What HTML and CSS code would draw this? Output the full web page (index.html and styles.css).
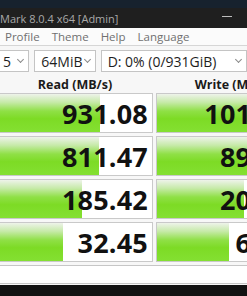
FILE: index.html
```html
<!DOCTYPE html>
<html lang="en">
<head>
    <meta charset="UTF-8">
    <meta name="viewport" content="width=device-width, initial-scale=1.0">
    <link rel="stylesheet" href="styles.css">
    <title>CrystalDiskMark 8.0.4 x64 [Admin]</title>
</head>
<body>
    <div class="window">
        <div class="desk"></div>
        <div class="titlebar">
            <span class="title">Mark 8.0.4 x64 [Admin]</span>
            <span class="min-btn"></span>
        </div>
        <div class="menubar">
            <span>Profile</span>
            <span>Theme</span>
            <span>Help</span>
            <span>Language</span>
        </div>
        <div class="controls">
            <div class="combo combo-count">5 <span class="chev"></span></div>
            <div class="combo combo-size">64MiB <span class="chev"></span></div>
            <div class="combo combo-drive">D: 0% (0/931GiB) <span class="chev"></span></div>
        </div>
        <div class="results">
            <div class="head">Read (MB/s)</div>
            <div class="head">Write (MB/s)</div>

            <div class="cell"><div class="bar" style="width: 102px"></div><span class="val">931.08</span></div>
            <div class="cell"><div class="bar" style="width: 120px"></div><span class="val">1014.36</span></div>

            <div class="cell"><div class="bar" style="width: 101px"></div><span class="val">811.47</span></div>
            <div class="cell"><div class="bar" style="width: 116px"></div><span class="val">893.72</span></div>

            <div class="cell"><div class="bar" style="width: 84px"></div><span class="val">185.42</span></div>
            <div class="cell"><div class="bar" style="width: 87px"></div><span class="val">204.18</span></div>

            <div class="cell"><div class="bar" style="width: 65px"></div><span class="val">32.45</span></div>
            <div class="cell"><div class="bar" style="width: 72px"></div><span class="val">68.51</span></div>
        </div>
        <div class="comment"></div>
        <div class="taskbar"></div>
    </div>
</body>
</html>
```

FILE: styles.css
```css
body {
    margin: 0;
    background-color: #f7f7f7;
    font-family: "Open Sans", "Liberation Sans", sans-serif;
}

.window {
    width: 247px;
    height: 296px;
    overflow: hidden;
    display: flex;
    flex-direction: column;
}

.desk {
    height: 8px;
    flex-shrink: 0;
    background-color: #17222e;
}

.titlebar {
    height: 20px;
    flex-shrink: 0;
    background-color: #1f1f1f;
    display: flex;
    align-items: center;
    justify-content: space-between;
    color: #a9a9a9;
    font-size: 11px;
}

.min-btn {
    width: 10px;
    height: 1px;
    background-color: #bdbdbd;
    margin-right: 15px;
    margin-bottom: 4px;
}

.menubar {
    height: 17px;
    flex-shrink: 0;
    background-color: #fbfbfb;
    border-bottom: 1px solid #d6d6d6;
    display: flex;
    align-items: center;
    gap: 12px;
    padding-left: 5px;
    font-size: 11.5px;
    color: #707070;
}

.controls {
    flex-shrink: 0;
    display: flex;
    gap: 5px;
    margin-top: 4px;
    margin-left: -4px;
}

.combo {
    height: 20px;
    border: 1px solid #c4c4c4;
    background-color: #ffffff;
    display: flex;
    align-items: center;
    justify-content: space-between;
    padding: 0 5px 0 6px;
    font-size: 14px;
    color: #1e1e1e;
}

.combo-count {
    width: 21px;
}

.combo-size {
    width: 50px;
}

.combo-drive {
    width: 138px;
}

.chev {
    width: 4px;
    height: 4px;
    border-right: 1px solid #8a8a8a;
    border-bottom: 1px solid #8a8a8a;
    transform: rotate(45deg);
    margin-bottom: 3px;
}

.results {
    flex-shrink: 0;
    display: grid;
    grid-template-columns: 156px 155px;
    grid-template-rows: 18px repeat(4, 40px);
    column-gap: 3px;
    row-gap: 3px;
    margin-left: -3px;
}

.head {
    text-align: center;
    font-weight: bold;
    font-size: 12.5px;
    color: #1a1a1a;
    padding-top: 5px;
    line-height: 16px;
}

.cell {
    position: relative;
    box-sizing: border-box;
    background-color: #ffffff;
    border: 1px solid #c9c9c9;
    display: flex;
    align-items: center;
    justify-content: flex-end;
    padding-right: 4px;
}

.bar {
    position: absolute;
    left: 0;
    top: 0;
    bottom: 0;
    background: linear-gradient(to bottom, #eef3ea 0%, #c6eaa8 22%, #8fe046 45%, #7ddb25 65%, #84e032 100%);
}

.val {
    position: relative;
    font-weight: bold;
    font-size: 27px;
    color: #111111;
    letter-spacing: 0.2px;
}

.comment {
    height: 17px;
    flex-shrink: 0;
    margin-top: 3px;
    margin-left: -3px;
    background-color: #ffffff;
    border-top: 1px solid #c6c6c6;
    border-bottom: 1px solid #c6c6c6;
}

.taskbar {
    height: 20px;
    flex-shrink: 0;
    margin-top: 1px;
    background-color: #121212;
}
```
